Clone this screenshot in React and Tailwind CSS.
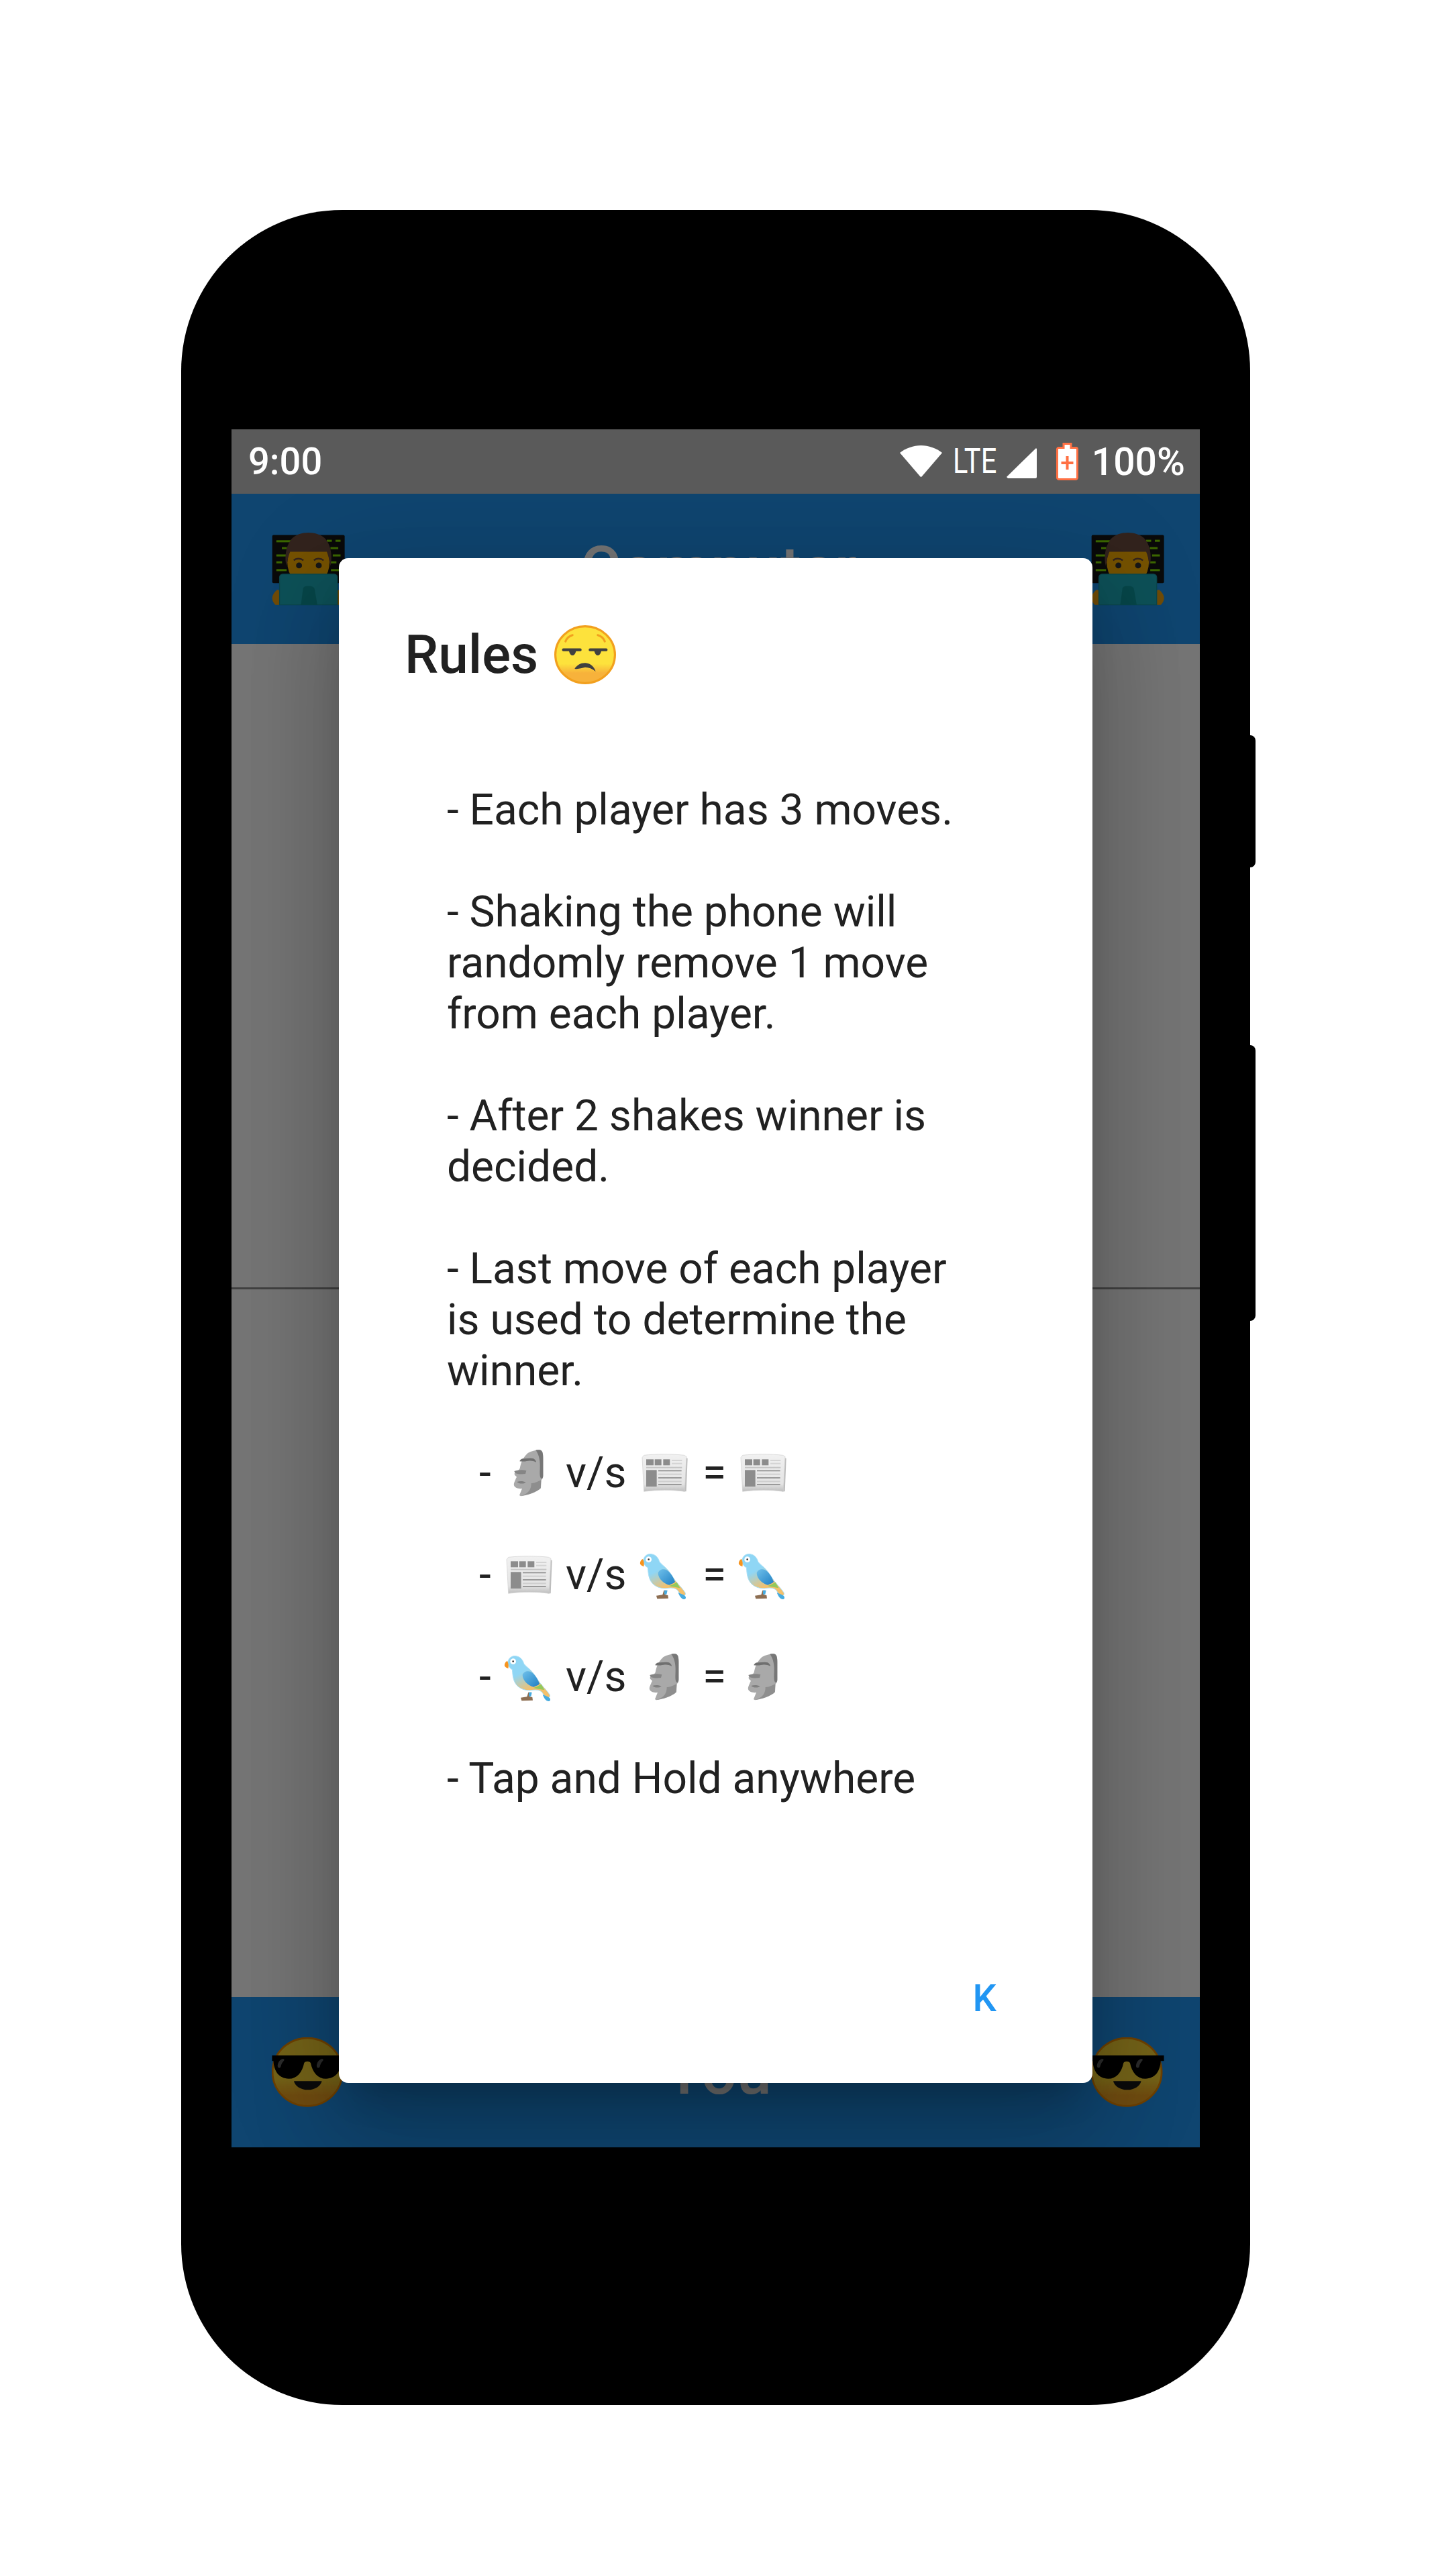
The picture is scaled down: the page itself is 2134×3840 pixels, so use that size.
import React from 'react';

const Unamused = ({ className }) => (
    <svg viewBox="0 0 88 84" className={className}>
        <defs>
            <linearGradient id="unamusedFill" x1="0" y1="0" x2="0" y2="1">
                <stop offset="0.66" stopColor="#fde23c" />
                <stop offset="0.82" stopColor="#f7b23b" />
            </linearGradient>
        </defs>
        <ellipse cx="44" cy="42" rx="42.5" ry="40.5" fill="url(#unamusedFill)" stroke="#f2a01e" strokeWidth="3" />
        <path d="M16 23c2-5 6-8 10-9" fill="none" stroke="#f2a01e" strokeWidth="3" strokeLinecap="round" />
        <path d="M72 23c-2-5-6-8-10-9" fill="none" stroke="#f2a01e" strokeWidth="3" strokeLinecap="round" />
        <path d="M13 33h24a1.5 1.5 0 0 1 0 4h-6c-1 4-3 6-5 6s-4-2-5-6h-8a2 2 0 0 1 0-4z" fill="#404040" />
        <path d="M51 33h23a2 2 0 0 1 0 4h-7c-1 4-3 6-5 6s-4-2-5-6h-6a2 2 0 0 1 0-4z" fill="#404040" />
        <path d="M29 62c4-6 10-9 17-8 6 1 11 5 13 12-5-4-10-6-15-6-5 1-10 3-15 2z" fill="#404040" />
    </svg>
);

const Technologist = ({ className, id }) => (
    <svg viewBox="40 42 322 322" className={className}>
        <rect x="42" y="55" width="316" height="210" rx="6" fill="#161616" />
        {[[60, 78, 65], [84, 108, 22], [60, 140, 45], [60, 170, 25], [60, 204, 45], [280, 76, 22], [318, 76, 22], [296, 108, 34], [306, 140, 34], [296, 170, 26], [298, 204, 42]].map(([x, y, w]) => (
            <rect key={`${id}-${x}-${y}`} x={x} y={y} width={w} height="9" fill="#84e000" />
        ))}
        <path d="M42 330c0-12 8-24 22-36l20 6v60H56c-8-8-14-18-14-30z" fill="#f3a612" />
        <path d="M358 330c0-12-8-24-22-36l-20 6v60h28c8-8 14-18 14-30z" fill="#f3a612" />
        <ellipse cx="200" cy="175" rx="92" ry="105" fill="#ffb300" />
        <path d="M104 190c-8-30-6-80 20-115 18-22 50-30 76-30s60 8 78 32c24 32 26 82 18 113-3-16-8-44-16-62-30 0-130 0-160 0-8 18-13 46-16 62z" fill="#6d4c41" />
        <path d="M136 166c10-10 30-10 42 0" fill="none" stroke="#6d4c41" strokeWidth="7" />
        <path d="M224 166c10-10 30-10 42 0" fill="none" stroke="#6d4c41" strokeWidth="7" />
        <circle cx="159" cy="188" r="13" fill="#333" />
        <circle cx="245" cy="188" r="13" fill="#333" />
        <path d="M88 226h224a14 14 0 0 1 14 14v120H74V240a14 14 0 0 1 14-14z" fill="#1fb0bf" stroke="#1b9aa6" strokeWidth="4" />
        <path d="M176 292c0-8 8-14 24-14s26 6 27 14l12 68h-72z" fill="#119aa0" />
    </svg>
);

const Cool = ({ className, id }) => (
    <svg viewBox="56 26 315 300" className={className}>
        <defs>
            <linearGradient id={id} x1="0" y1="0" x2="0" y2="1">
                <stop offset="0.6" stopColor="#fdd835" />
                <stop offset="0.85" stopColor="#f5a623" />
            </linearGradient>
        </defs>
        <ellipse cx="208" cy="175" rx="150" ry="146" fill={`url(#${id})`} stroke="#f08c00" strokeWidth="8" />
        <path d="M56 104h312v24h-14c-2 44-24 76-66 76-36 0-58-28-66-68-4-8-24-8-28 0-8 40-30 68-66 68-42 0-64-32-66-76H56z" fill="#060606" />
        <path d="M80 150c0-14 8-28 22-32 6 0 8 4 5 8-8 8-12 18-14 28-4 6-12 4-13-4z" fill="#5f5f5f" />
        <path d="M248 150c0-14 8-28 22-32 6 0 8 4 5 8-8 8-12 18-14 28-4 6-12 4-13-4z" fill="#5f5f5f" />
        <path d="M150 214h120c-4 20-28 38-60 38s-56-18-60-38z" fill="#1a1a1a" />
    </svg>
);

const Moai = () => (
    <svg viewBox="9 45 240 240" className="w-[80px] h-[80px] shrink-0">
        <path d="M125 75c20-10 45-16 58-12 8 3 10 14 10 35v80c0 10-4 14-8 18l-2 36c-20 20-60 32-90 36l-6-4 12-30c-14 2-32-2-36-14-2-10 4-18 8-30l4-8c-2-4-10-6-10-14s18-12 24-24c4-20 10-46 36-69z" fill="#a9a9a9" />
        <path d="M160 62c10-2 22-2 24 2 6 4 9 14 9 34v78c0 8-3 12-6 14-12-4-8-30-8-60 0-28-6-50-19-68z" fill="#777" />
        <path d="M88 112c2-8 10-14 22-12 14 0 28-4 40 0 8 4 12 12 12 16-12-6-22-8-36-6-12 2-26 4-38 2z" fill="#6f6f6f" />
        <path d="M64 156c16-4 34-8 54-2l-4 14c-16 2-36 2-46-4z" fill="#858585" />
        <path d="M76 204c12-4 28-4 40 2-10 8-30 8-40-2z" fill="#808080" />
        <path d="M140 210c14 2 30-8 44-14l-2 36c-18 18-56 30-86 34 34-10 44-30 44-56z" fill="#8e8e8e" />
    </svg>
);

const Newspaper = () => (
    <svg viewBox="15 0 240 240" className="w-[80px] h-[80px] shrink-0">
        <defs>
            <linearGradient id="paperFill" x1="0" y1="0" x2="0" y2="1">
                <stop offset="0" stopColor="#f1f1f1" />
                <stop offset="0.8" stopColor="#e4e4e4" />
                <stop offset="1" stopColor="#bdbdbd" />
            </linearGradient>
        </defs>
        <path d="M225 50l14 4-6 148-14 0z" fill="#bcbcbc" />
        <path d="M44 40c50-6 130-6 180 0l10 6-8 156c-56-8-120-8-182 0l-8-152z" fill="url(#paperFill)" stroke="#cfcfcf" strokeWidth="2" />
        <rect x="54" y="58" width="33" height="27" fill="#8c8c8c" />
        <rect x="92" y="58" width="30" height="27" fill="#8c8c8c" />
        <rect x="130" y="58" width="30" height="27" fill="#8c8c8c" />
        <rect x="168" y="60" width="46" height="6" fill="#d4d4d4" />
        <rect x="168" y="74" width="46" height="6" fill="#d4d4d4" />
        <rect x="54" y="92" width="160" height="6" fill="#c4c4c4" />
        <rect x="54" y="106" width="47" height="74" fill="#8c8c8c" />
        {[106, 122, 138, 154, 168].map((y, i) => (
            <rect key={y} x="108" y={y} width="104" height="6" fill={i % 2 ? '#cfcfcf' : '#9a9a9a'} />
        ))}
    </svg>
);

const Parrot = () => (
    <svg viewBox="30 18 240 240" className="w-[80px] h-[80px] shrink-0">
        <defs>
            <linearGradient id="parrotBody" x1="0" y1="0" x2="0.5" y2="1">
                <stop offset="0.45" stopColor="#8fd6f5" />
                <stop offset="0.85" stopColor="#f4c06b" />
            </linearGradient>
            <linearGradient id="parrotWing" x1="0" y1="0" x2="1" y2="1">
                <stop offset="0" stopColor="#6fc0ea" />
                <stop offset="1" stopColor="#1f7fc4" />
            </linearGradient>
        </defs>
        <path d="M56 72c4-20 18-30 36-28 18 2 30 14 36 34 10 14 26 22 40 40 14 18 28 44 44 60 10 12 24 26 32 40 2 8-4 14-14 12-10-4-14-16-22-26-10-8-24-10-40-8-30 6-64-6-78-30-12-20-12-44-14-62-10-4-18-14-20-32z" fill="url(#parrotBody)" stroke="#a9e0f7" strokeWidth="3" />
        <path d="M122 128c4-14 22-20 36-14 20 10 32 34 40 54-6 8-18 10-26 14-22-4-50-28-50-54z" fill="url(#parrotWing)" />
        <path d="M170 186c12-2 24-10 36-16l14 26c-16-4-34-6-50-10z" fill="#94c95c" />
        <path d="M212 216c8 4 20 8 30 14 6 6 6 14-2 16-14 0-22-14-28-30z" fill="#46abe0" />
        <path d="M54 66c-8 2-14 14-12 22 2 6 10 10 16 12 2-10 2-24-4-34z" fill="#f7941e" />
        <circle cx="80" cy="68" r="13" fill="#fff" />
        <circle cx="80" cy="68" r="4" fill="#333" />
        <path d="M148 206l12 0-6 20 12 2 2 14-50 2-4-14 28-4z" fill="#8d6e52" />
        <path d="M150 206h14l-4 18h-10z" fill="#46abe0" />
    </svg>
);

const Wifi = () => (
    <svg viewBox="0 0 63 48" className="w-[63px] h-[48px]">
        <path d="M0 11C9 4 20 0 31.500 0S54 4 63 11L33 46a2 2 0 0 1-3 0z" fill="#fff" />
    </svg>
);

const Battery = () => (
    <svg viewBox="0 0 33 56" className="w-[33px] h-[56px]">
        <path d="M11 1.500h11v6h8a2 2 0 0 1 1.500 2V52a2.500 2.500 0 0 1-2.500 2.500H4A2.500 2.500 0 0 1 1.500 52V9.500a2 2 0 0 1 2-2h7.500z" fill="#fff" stroke="#ff7043" strokeWidth="3" />
        <path d="M14.500 20h4v8h7v4h-7v8h-4v-8h-7v-4h7z" fill="#ff7043" />
    </svg>
);

const rules = [
    ['- Each player has 3 moves.'],
    [''],
    ['- Shaking the phone will', 'randomly remove 1 move', 'from each player.'],
    [''],
    ['- After 2 shakes winner is', 'decided.'],
    [''],
    ['- Last move of each player', 'is used to determine the', 'winner.'],
    [''],
];

const moves = [
    [Moai, Newspaper, Newspaper],
    [Newspaper, Parrot, Parrot],
    [Parrot, Moai, Moai],
];

const PlayerBar = ({ name, children }) => (
    <div className="h-[224px] bg-[#2196f3] flex items-center justify-between pl-[60px] pr-[52px]">
        {children}
        <span className="text-[93px] font-medium leading-none text-white">{name}</span>
        {children}
    </div>
);

const App = () => {
    return (
        <div className="h-[3840px] bg-white pt-[313px] pl-[270px] font-['Roboto',sans-serif]">
            <div className="relative w-[1593px] h-[3272px] bg-black rounded-[240px] pt-[327px] px-[75px]">
                <div className="absolute right-[-8px] top-[783px] w-[16px] h-[197px] bg-black rounded-r-[8px]"></div>
                <div className="absolute right-[-8px] top-[1245px] w-[16px] h-[411px] bg-black rounded-r-[8px]"></div>

                <div className="w-[1443px] h-[2561px] flex flex-col">
                    <div className="h-[96px] shrink-0 bg-[#5a5a5a] text-white flex items-center justify-between pl-[25px] pr-[22px]">
                        <span className="text-[56px] font-medium leading-none">9:00</span>
                        <div className="flex items-center">
                            <Wifi />
                            <span className="w-[66px] ml-[16px] text-[52px] leading-none scale-x-[.8] origin-left whitespace-nowrap">LTE</span>
                            <svg viewBox="0 0 45 45" className="w-[45px] h-[45px] ml-[14px] mt-[4px]">
                                <path d="M0 43L43 1a1 1 0 0 1 2 1v41a2 2 0 0 1-2 2H2z" fill="#fff" />
                            </svg>
                            <div className="ml-[29px]"><Battery /></div>
                            <span className="ml-[20px] text-[57px] font-medium leading-none">100%</span>
                        </div>
                    </div>

                    <div className="relative flex-1 flex flex-col overflow-hidden">
                        <PlayerBar name="Computer">
                            <Technologist id="bot" className="w-[110px] h-[110px]" />
                        </PlayerBar>
                        <div className="h-[962px] bg-white border-b-[3px] border-[#8f8f8f]"></div>
                        <div className="flex-1 bg-white"></div>
                        <PlayerBar name="You">
                            <Cool id="coolFace" className="w-[110px] h-[104px]" />
                        </PlayerBar>

                        <div className="absolute inset-0 bg-black/54 flex items-center justify-center">
                            <div className="w-[1123px] h-[2273px] bg-white rounded-[14px] pt-[98px] pl-[98px] flex flex-col text-[#212121] shadow-[0_84px_133px_10px_rgba(0,0,0,0.14),0_32px_161px_28px_rgba(0,0,0,0.12),0_38px_52px_-24px_rgba(0,0,0,0.2)]">
                                <div className="h-[92px] flex items-center text-[80px] font-medium leading-none">
                                    Rules
                                    <Unamused className="w-[92px] h-[88px] ml-[24px]" />
                                </div>

                                <div className="mt-[148px] pl-[63px] text-[64px] leading-[76px]">
                                    {rules.flat().map((line, i) => (
                                        <div key={i} className="h-[76px] whitespace-nowrap">{line}</div>
                                    ))}
                                    {moves.map(([a, b, c], i) => {
                                        const A = a, B = b, C = c;
                                        return (
                                            <React.Fragment key={i}>
                                                <div className="h-[76px] flex items-center pl-[48px]">
                                                    <span className="w-[34px]">-</span>
                                                    <A />
                                                    <span className="w-[122px] pl-[15px]">v/s</span>
                                                    <B />
                                                    <span className="w-[67px] pl-[17px]">=</span>
                                                    <C />
                                                </div>
                                                <div className="h-[76px]"></div>
                                            </React.Fragment>
                                        );
                                    })}
                                    <div className="h-[76px] whitespace-nowrap">- Tap and Hold anywhere</div>
                                </div>

                                <div className="mt-[251px] pr-[143px] text-right text-[56px] font-medium leading-[76px] text-[#2196f3]">K</div>
                            </div>
                        </div>
                    </div>
                </div>
            </div>
        </div>
    );
};

export default App;
